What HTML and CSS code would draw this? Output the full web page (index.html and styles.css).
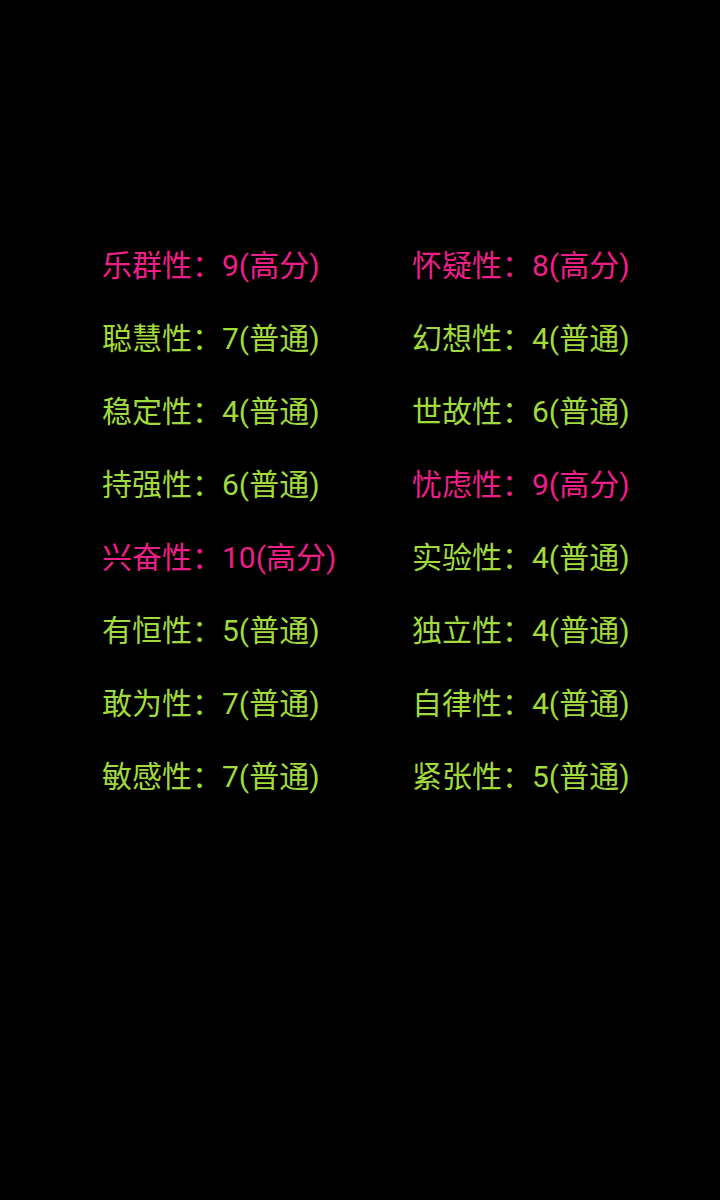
FILE: index.html
```html
<!DOCTYPE html>
<html lang="zh">
<head>
<meta charset="utf-8">
<link rel="stylesheet" href="styles.css">
</head>
<body>
<div class="grid">
  <div class="item high">乐群性：9(高分)</div>
  <div class="item high">怀疑性：8(高分)</div>
  <div class="item">聪慧性：7(普通)</div>
  <div class="item">幻想性：4(普通)</div>
  <div class="item">稳定性：4(普通)</div>
  <div class="item">世故性：6(普通)</div>
  <div class="item">持强性：6(普通)</div>
  <div class="item high">忧虑性：9(高分)</div>
  <div class="item high">兴奋性：10(高分)</div>
  <div class="item">实验性：4(普通)</div>
  <div class="item">有恒性：5(普通)</div>
  <div class="item">独立性：4(普通)</div>
  <div class="item">敢为性：7(普通)</div>
  <div class="item">自律性：4(普通)</div>
  <div class="item">敏感性：7(普通)</div>
  <div class="item">紧张性：5(普通)</div>
</div>
</body>
</html>
```
FILE: styles.css
```css
html, body {
  margin: 0;
  padding: 0;
  background: #000;
  height: 100%;
}
body {
  font-family: Roboto, "Noto Sans CJK SC", sans-serif;
  font-size: 30px;
}
.grid {
  display: grid;
  grid-template-columns: 310px 310px;
  grid-auto-rows: 73px;
  padding: 229px 0 0 102px;
}
.item {
  line-height: 73px;
  white-space: nowrap;
  color: #a0da3c;
}
.item.high {
  color: #ee1f88;
}
```
